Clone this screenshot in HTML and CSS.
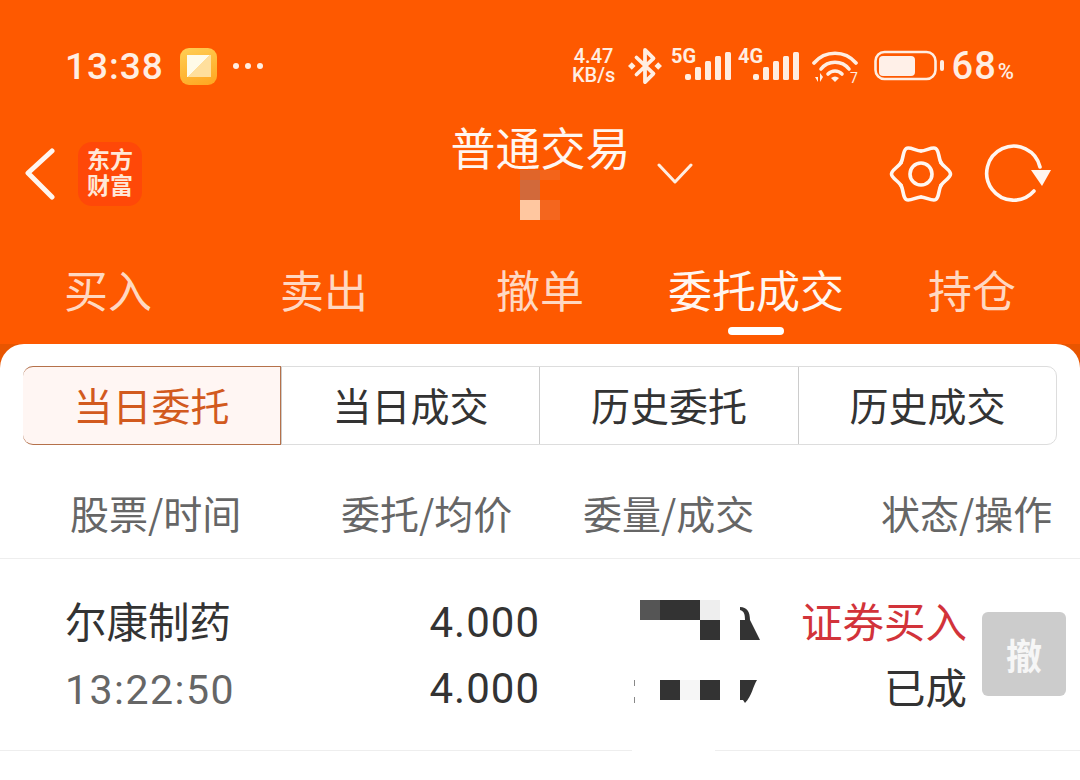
FILE: index.html
```html
<!DOCTYPE html>
<html lang="zh-CN">
<head>
  <title>普通交易</title>
  <meta charset="UTF-8">
  <link rel="stylesheet" href="styles.css">
</head>
<body>
  <div class="top">
    <div class="status">
      <div class="status-left">
        <span class="clock">13:38</span>
        <span class="note-icon"><span class="note-inner"></span></span>
        <span class="dots"><i></i><i></i><i></i></span>
      </div>
      <div class="status-right">
        <div class="speed">4.47<br>KB/s</div>
        <svg class="bt" width="34" height="38" viewBox="0 0 36 40">
          <path d="M9 11 L27 28 L18 37 V3 L27 12 L9 29" fill="none" stroke="#ffeee2" stroke-width="4" stroke-linejoin="round" stroke-linecap="round"/>
          <path d="M4 16 L8 20 L4 24 L0 20Z M32 16 L36 20 L32 24 L28 20Z" fill="#ffeee2"/>
        </svg>
        <svg class="sig sig-first" width="61" height="40" viewBox="0 -5 61 40">
          <text x="1" y="16" class="sig-text">5G</text>
          <rect x="15" y="27" width="6" height="6" rx="2"/>
          <rect x="25" y="20" width="6" height="13" rx="1.5"/>
          <rect x="35" y="14" width="6" height="19" rx="1.5"/>
          <rect x="45" y="9" width="6" height="24" rx="1.5"/>
          <rect x="55" y="5" width="6" height="28" rx="1.5"/>
        </svg>
        <svg class="sig" width="61" height="40" viewBox="0 -5 61 40">
          <text x="0" y="16" class="sig-text">4G</text>
          <rect x="15" y="27" width="6" height="6" rx="2"/>
          <rect x="25" y="20" width="6" height="13" rx="1.5"/>
          <rect x="35" y="14" width="6" height="19" rx="1.5"/>
          <rect x="45" y="9" width="6" height="24" rx="1.5"/>
          <rect x="55" y="5" width="6" height="28" rx="1.5"/>
        </svg>
        <svg class="wifi" width="47" height="40" viewBox="0 0 47 40">
          <g fill="none" stroke="#ffeee2" stroke-width="3.6" stroke-linecap="round">
            <path d="M2 14 C13 1 33 1 44 14"/>
            <path d="M9 20 C16 11 30 11 37 20"/>
            <path d="M16 25 C20 21 26 21 30 25"/>
          </g>
          <path d="M19 29 Q23 26 27 29 L23 33Z" fill="#ffeee2"/>
          <path d="M3 28 L6 28 L6 33Z M8 24 L8 33 L11 28Z" fill="#ffeee2"/>
          <text x="38" y="34" class="wifi-text">7</text>
        </svg>
        <svg class="batt" width="70" height="32" viewBox="0 0 70 32">
          <rect x="1.5" y="2" width="60" height="27" rx="9" fill="none" stroke="#ffeee2" stroke-width="2.6"/>
          <rect x="5" y="6" width="36" height="20" rx="4" fill="#fff0e8"/>
          <rect x="66" y="10" width="4" height="11" rx="2" fill="#ffeee2"/>
        </svg>
        <span class="pct">68<small>%</small></span>
      </div>
    </div>

    <div class="nav">
      <div class="nav-left">
        <svg width="30" height="52" viewBox="0 0 30 52">
          <path d="M27 3 L3 25 L27 49" fill="none" stroke="#fff6f0" stroke-width="5" stroke-linecap="round" stroke-linejoin="round"/>
        </svg>
        <div class="logo">东方<br>财富</div>
      </div>
      <div class="title">普通交易</div>
      <div class="nav-right">
        <svg class="caret" width="36" height="22" viewBox="0 0 36 22">
          <path d="M2 2 L18 19 L34 2" fill="none" stroke="#ffeee2" stroke-width="3" stroke-linecap="round" stroke-linejoin="round"/>
        </svg>
        <div class="nav-icons">
          <svg width="66" height="66" viewBox="-33 -33 66 66">
            <g fill="none" stroke="#fff6f0" stroke-width="3.6" stroke-linecap="round">
              <path id="lobe" d="M19.9 -11.5 C22.4 -7.2 29.5 -4 29.5 0 C29.5 4 22.4 7.2 19.9 11.5"/>
              <use href="#lobe" transform="rotate(60)"/>
              <use href="#lobe" transform="rotate(120)"/>
              <use href="#lobe" transform="rotate(180)"/>
              <use href="#lobe" transform="rotate(240)"/>
              <use href="#lobe" transform="rotate(300)"/>
              <circle r="11"/>
            </g>
          </svg>
          <svg width="68" height="62" viewBox="0 0 68 62">
            <path d="M50 48 A27 27 0 1 1 56 24" fill="none" stroke="#fff6f0" stroke-width="3.6" stroke-linecap="round"/>
            <path d="M47 27 H67 L58 43Z" fill="#fff6f0"/>
          </svg>
        </div>
      </div>
      <svg class="mosaic-title" width="40" height="50" viewBox="0 0 40 50">
        <rect x="0" y="0" width="20" height="10" fill="#e0652a"/>
        <rect x="20" y="0" width="20" height="10" fill="#f3641a"/>
        <rect x="0" y="10" width="20" height="20" fill="#d2693a"/>
        <rect x="0" y="30" width="20" height="20" fill="#ffc7a0"/>
        <rect x="20" y="30" width="20" height="20" fill="#f4661e"/>
      </svg>
    </div>

    <div class="tabs">
      <div class="tab">买入</div>
      <div class="tab">卖出</div>
      <div class="tab">撤单</div>
      <div class="tab tab-on">委托成交<i class="tab-line"></i></div>
      <div class="tab">持仓</div>
    </div>
  </div>

  <div class="card">
    <div class="seg">
      <div class="seg-item seg-on">当日委托</div>
      <div class="seg-item">当日成交</div>
      <div class="seg-item">历史委托</div>
      <div class="seg-item">历史成交</div>
    </div>

    <div class="thead">
      <span>股票/时间</span>
      <span>委托/均价</span>
      <span>委量/成交</span>
      <span>状态/操作</span>
    </div>

    <div class="row">
      <div class="cell-name">
        <span>尔康制药</span>
        <span class="time">13:22:50</span>
      </div>
      <div class="cell-price">
        <span>4.000</span>
        <span>4.000</span>
      </div>
      <div class="cell-state">
        <span class="buy">证券买入</span>
        <span>已成</span>
      </div>
      <div class="cancel">撤</div>
      <svg class="mosaic-row" width="130" height="160" viewBox="0 0 130 160">
        <rect x="8" y="0" width="20" height="20" fill="#555"/>
        <rect x="28" y="0" width="40" height="20" fill="#333"/>
        <rect x="68" y="0" width="20" height="20" fill="#eee"/>
        <rect x="68" y="20" width="20" height="20" fill="#333"/>
        <path d="M108 7 C115 7 118 12 118 20 L128 40 H108 V20 H113 C113 14 112 11 108 10Z" fill="#333"/>
        <rect x="2" y="80" width="1" height="6" fill="#888"/>
        <rect x="2" y="97" width="1" height="6" fill="#888"/>
        <rect x="28" y="80" width="20" height="20" fill="#333"/>
        <rect x="48" y="80" width="20" height="20" fill="#f6f6f6"/>
        <rect x="68" y="80" width="20" height="20" fill="#333"/>
        <path d="M108 80 H125 C121 86 120 96 113 103 L111 100 H108Z" fill="#333"/>
        <rect x="0" y="148" width="83" height="6" fill="#fff"/>
      </svg>
    </div>
  </div>
</body>
</html>
```

FILE: styles.css
```css
html, body {
  margin: 0;
  height: 780px;
  overflow: hidden;
}

body {
  display: flex;
  flex-direction: column;
  background-color: #e85500;
  font-family: "Noto Sans CJK SC", Roboto, sans-serif;
  color: #333;
}

.top {
  height: 344px;
  background-color: #fe5900;
  color: #fff6f0;
}

.status {
  height: 124px;
  box-sizing: border-box;
  padding: 8px 65px 0;
  display: flex;
  justify-content: space-between;
  align-items: center;
  color: #ffeee2;
}

.status-left {
  display: flex;
  align-items: center;
}

.clock {
  font-family: Roboto, sans-serif;
  font-size: 37px;
  font-weight: 500;
  letter-spacing: 1px;
  width: 115px;
}

.note-icon {
  width: 37px;
  height: 37px;
  border-radius: 9px;
  background: linear-gradient(160deg, #ffcf55, #ffa51f);
  display: flex;
  align-items: center;
  justify-content: center;
}

.note-inner {
  width: 24px;
  height: 22px;
  background: linear-gradient(135deg, #fffbe8 50%, #ffdf9c 50%);
}

.dots {
  display: flex;
  gap: 6px;
  margin-left: 16px;
}

.dots i {
  width: 6px;
  height: 6px;
  border-radius: 50%;
  background-color: #ffeee2;
}

.status-right {
  display: flex;
  align-items: center;
}

.speed {
  text-align: center;
  font-family: Roboto, sans-serif;
  font-size: 20px;
  font-weight: 500;
  line-height: 19px;
  width: 44px;
}

.bt {
  margin-left: 12px;
}

.sig {
  margin: -8px 0 0 13px;
  fill: #ffeee2;
}

.sig-first {
  margin-left: 8px;
}

.sig + .sig {
  margin-left: 7px;
}

.sig-text {
  font-family: Roboto, sans-serif;
  font-size: 20px;
  font-weight: 700;
}

.wifi {
  margin: 6px 0 0 13px;
}

.wifi-text {
  font-family: Roboto, sans-serif;
  font-size: 14px;
  fill: #ffeee2;
}

.batt {
  margin: -1px 0 0 15px;
}

.pct {
  margin-left: 8px;
  font-family: Roboto, sans-serif;
  font-size: 38px;
  font-weight: 500;
  letter-spacing: 1px;
}

.pct small {
  font-size: 22px;
  margin-left: 1px;
}

.nav {
  height: 100px;
  box-sizing: border-box;
  padding: 0 28px 0 25px;
  position: relative;
  display: grid;
  grid-template-columns: 1fr 176px 1fr;
}

.nav-left {
  display: flex;
  align-items: center;
  gap: 23px;
}

.logo {
  width: 64px;
  height: 64px;
  border-radius: 14px;
  background-color: #ff4808;
  text-align: center;
  font-size: 23px;
  line-height: 26px;
  font-weight: 700;
  color: #ffe8d8;
  box-sizing: border-box;
  padding-top: 3px;
}

.title {
  margin-top: -3px;
  font-size: 45px;
  line-height: 52px;
  text-align: center;
  white-space: nowrap;
}

.nav-right {
  display: flex;
  align-items: center;
  justify-content: space-between;
}

.caret {
  margin-left: 30px;
}

.nav-icons {
  display: flex;
  align-items: center;
  gap: 30px;
}

.mosaic-title {
  position: absolute;
  left: 520px;
  top: 46px;
}

.tabs {
  display: grid;
  grid-template-columns: repeat(5, 1fr);
  padding-top: 41px;
}

.tab {
  display: flex;
  flex-direction: column;
  align-items: center;
  font-size: 44px;
  line-height: 48px;
  color: #ffd8c2;
}

.tab-on {
  color: #fff6f0;
}

.tab-line {
  width: 56px;
  height: 8px;
  margin-top: 14px;
  border-radius: 4px;
  background-color: #fff;
}

.card {
  flex: 1;
  background-color: #fff;
  border-radius: 24px 24px 0 0;
  padding-top: 22px;
}

.seg {
  margin: 0 23px;
  height: 79px;
  box-sizing: border-box;
  display: grid;
  grid-template-columns: 257px 258px 259px 1fr;
  border: 1px solid #ddd;
  border-radius: 10px;
}

.seg-item {
  display: flex;
  align-items: center;
  justify-content: center;
  padding-bottom: 3px;
  font-size: 39px;
  border-left: 1px solid #ccc;
}

.seg-item:first-child {
  border-left: none;
}

.seg-on {
  margin: -1px 0 -1px -1px;
  border: 1px solid #b5714a;
  border-radius: 10px 0 0 10px;
  background-color: #fff6f3;
  color: #d25a1e;
}

.thead {
  height: 114px;
  box-sizing: border-box;
  padding: 37px 0 0 70px;
  display: grid;
  grid-template-columns: 271px 242px 298px auto;
  border-bottom: 1px solid #eee;
  font-size: 39px;
  line-height: 60px;
  color: #666;
}

.row {
  height: 192px;
  box-sizing: border-box;
  padding: 0 14px 0 65px;
  position: relative;
  display: flex;
  align-items: flex-start;
  border-bottom: 1px solid #eee;
  font-size: 41.5px;
  line-height: 66px;
}

.cell-name,
.cell-price,
.cell-state {
  display: flex;
  flex-direction: column;
  margin-top: 28px;
}

.cell-name {
  width: 201px;
}

.time {
  margin-top: 4px;
  font-family: Roboto, sans-serif;
  font-size: 41px;
  color: #666;
  letter-spacing: 1.5px;
}

.cell-price {
  margin-top: 31px;
  width: 274px;
  align-items: flex-end;
  font-family: Roboto, sans-serif;
  font-size: 42px;
  letter-spacing: 1px;
}

.cell-state {
  width: 427px;
  align-items: flex-end;
}

.buy {
  color: #d2333a;
}

.cancel {
  width: 84px;
  height: 84px;
  margin: 53px 0 0 15px;
  border-radius: 6px;
  background-color: #ccc;
  display: flex;
  align-items: center;
  justify-content: center;
  font-size: 36px;
  line-height: 84px;
  font-weight: 700;
  color: #f6f6f6;
}

.mosaic-row {
  position: absolute;
  left: 632px;
  top: 41px;
}
```
